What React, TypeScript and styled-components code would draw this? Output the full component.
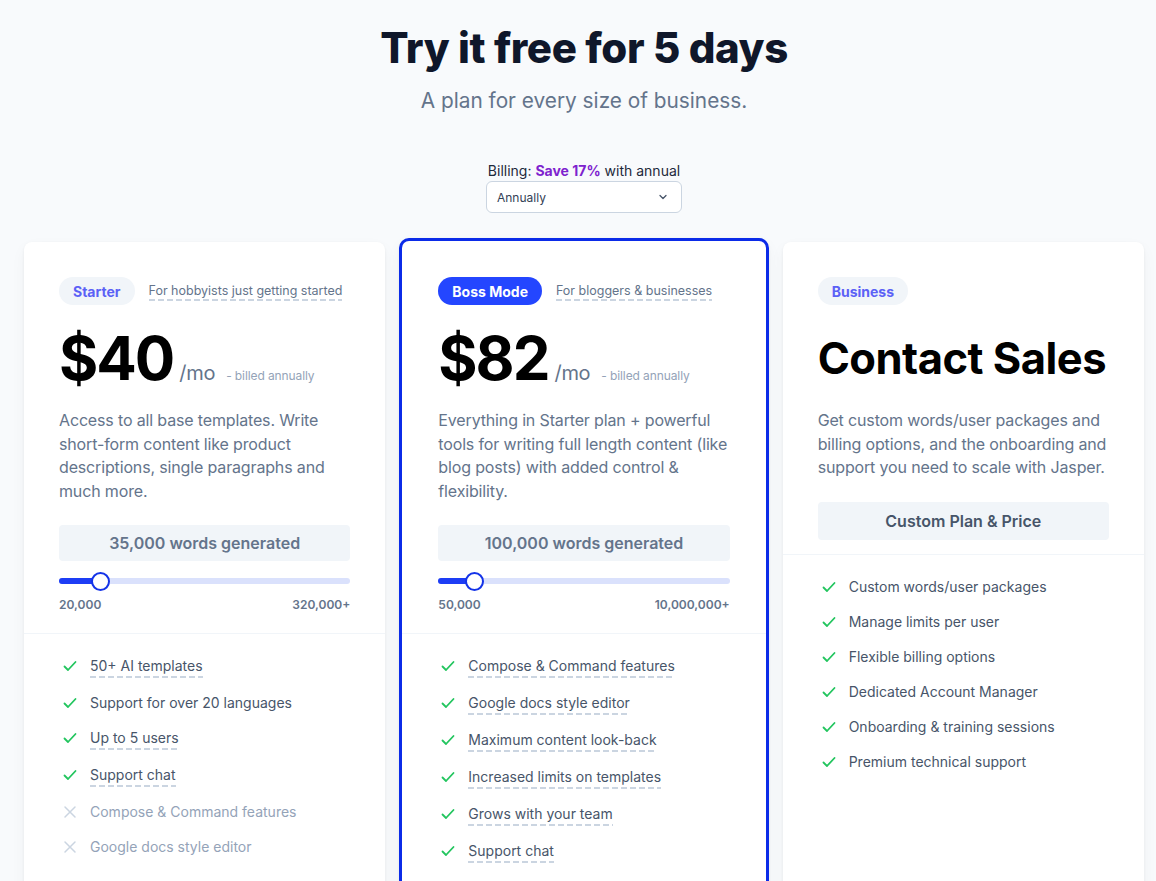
import styled, { createGlobalStyle, css } from "styled-components";

const GlobalStyle = createGlobalStyle`
  * { box-sizing: border-box; }
  body {
    margin: 0;
    background: #f8fafc;
    font-family: Inter, "Noto Sans", sans-serif;
    color: #0f172a;
  }
`

const Page = styled.div`
  padding: 23px 12px 0 24px;
  height: 881px;
  overflow: hidden;
  display: flex;
  flex-direction: column;
`
const Header = styled.header`
  display: flex;
  flex-direction: column;
  align-items: center;
`
const Title = styled.h1`
  margin: 0;
  font-size: 42px;
  line-height: 50px;
  font-weight: 800;
  color: #0f172a;
  letter-spacing: -0.4px;
`
const Subtitle = styled.p`
  margin: 14px 0 0;
  font-size: 20.8px;
  line-height: 28px;
  color: #64748b;
`
const BillingLabel = styled.div`
  margin-top: 46px;
  font-size: 14px;
  line-height: 20px;
  color: #1e293b;
  b {
    color: #7e22ce;
    font-weight: 700;
  }
`
const Select = styled.div`
  width: 196px;
  height: 32px;
  border: 1px solid #cbd5e1;
  border-radius: 6px;
  background: #fff;
  display: flex;
  align-items: center;
  justify-content: space-between;
  padding: 0 12px 0 10px;
  font-size: 12px;
  color: #334155;
`
const Cards = styled.div`
  flex: 1;
  margin-top: 29px;
  display: grid;
  grid-template-columns: repeat(3, 1fr);
  gap: 18px;
  align-items: stretch;
`
const Card = styled.section<{ $featured?: boolean }>`
  background: #fff;
  border-radius: 8px 8px 0 0;
  box-shadow: 0 1px 3px rgba(15, 23, 42, 0.06), 0 6px 16px rgba(15, 23, 42, 0.04);
  ${(p) =>
    p.$featured &&
    css`
      margin: -4px -4px 0;
      border: 3px solid #0b2be8;
      border-bottom: none;
      border-radius: 10px 10px 0 0;
    `}
`
const Top = styled.div<{ $featured?: boolean }>`
  padding: ${(p) => (p.$featured ? "36px 36px 20px" : "35px 35px 20px")};
  border-bottom: 1px solid #f1f5f9;
`
const BadgeRow = styled.div`
  display: flex;
  align-items: center;
  gap: 14px;
`
const Badge = styled.span<{ $solid?: boolean }>`
  height: 28px;
  padding: 0 14px;
  border-radius: 14px;
  display: inline-flex;
  align-items: center;
  font-size: 14px;
  font-weight: 700;
  background: ${(p) => (p.$solid ? "#2446ff" : "#f1f5f9")};
  color: ${(p) => (p.$solid ? "#fff" : "#5b61f6")};
`
const Tagline = styled.span`
  font-size: 12.5px;
  line-height: 18px;
  color: #64748b;
  padding-bottom: 1px;
  background-image: linear-gradient(to right, #cbd5e1 65%, transparent 0);
  background-size: 9px 2px;
  background-repeat: repeat-x;
  background-position: left bottom;
`
const PriceRow = styled.div`
  margin-top: 23px;
  display: flex;
  align-items: baseline;
`
const Price = styled.span`
  font-size: 60px;
  line-height: 60px;
  font-weight: 700;
  color: #000;
  letter-spacing: -2px;
`
const Per = styled.span`
  margin-left: 6px;
  font-size: 20px;
  color: #64748b;
  letter-spacing: -0.3px;
`
const Billed = styled.span`
  margin-left: 11px;
  font-size: 12px;
  color: #94a3b8;
  letter-spacing: -0.1px;
`
const ContactTitle = styled.h2`
  margin: 23px 0 0;
  font-size: 43.5px;
  line-height: 60px;
  font-weight: 700;
  color: #000;
  letter-spacing: -0.5px;
  white-space: nowrap;
`
const Description = styled.p`
  margin: 21px 0 0;
  font-size: 16px;
  line-height: 23.6px;
  color: #64748b;
  letter-spacing: -0.15px;
`
const WordsBox = styled.div`
  margin-top: 22px;
  height: 36px;
  border-radius: 4px;
  background: #f1f5f9;
  display: flex;
  align-items: center;
  justify-content: center;
  font-size: 16px;
  font-weight: 600;
  color: #64748b;
`
const ActionButton = styled(WordsBox)`
  height: 38px;
  color: #475569;
  margin-top: 22px;
  margin-bottom: -6px;
`
const Track = styled.div`
  position: relative;
  margin-top: 17px;
  height: 6px;
  border-radius: 3px;
  background: #dae1fc;
`
const Fill = styled.div`
  height: 100%;
  border-radius: 3px;
  background: #1d3df5;
`
const Thumb = styled.div`
  position: absolute;
  top: 50%;
  width: 19px;
  height: 19px;
  margin: -9.5px 0 0 -9.5px;
  border-radius: 50%;
  background: #fff;
  border: 2px solid #1433e8;
`
const RangeLabels = styled.div`
  margin-top: 13px;
  display: flex;
  justify-content: space-between;
  font-size: 12px;
  line-height: 16px;
  font-weight: 600;
  color: #64748b;
`
const Features = styled.ul`
  list-style: none;
  margin: 0;
  padding: 22px 35px 30px 38px;
  display: flex;
  flex-direction: column;
  gap: 15px;
`
const Feature = styled.li<{ $off?: boolean }>`
  display: flex;
  align-items: flex-start;
  gap: 12px;
  font-size: 14px;
  line-height: 20px;
  color: ${(p) => (p.$off ? "#94a3b8" : "#475569")};
  svg {
    flex: none;
    margin-top: 2px;
  }
`
const Dashed = styled.span<{ $dashed?: boolean }>`
  ${(p) =>
    p.$dashed &&
    css`
      padding-bottom: 2px;
      background-image: linear-gradient(to right, #cbd5e1 65%, transparent 0);
      background-size: 9px 2px;
      background-repeat: repeat-x;
      background-position: left bottom;
    `}
`

const CheckIcon = () => (
  <svg width="16" height="16" viewBox="0 0 16 16" fill="none">
    <path d="M2.5 8.5 6 12l7.5-8" stroke="#22c55e" strokeWidth="1.8" strokeLinecap="round" strokeLinejoin="round" />
  </svg>
)
const CrossIcon = () => (
  <svg width="16" height="16" viewBox="0 0 16 16" fill="none">
    <path d="M3 3l10 10M13 3 3 13" stroke="#cbd5e1" strokeWidth="1.5" strokeLinecap="round" />
  </svg>
)
const Chevron = () => (
  <svg width="12" height="12" viewBox="0 0 12 12" fill="none">
    <path d="M3 4.5 6 7.5l3-3" stroke="#475569" strokeWidth="1.3" strokeLinecap="round" strokeLinejoin="round" />
  </svg>
)

interface IFeature {
  text: string;
  dashed?: boolean;
  off?: boolean;
}

interface IPlan {
  badge: string;
  tagline: string;
  price: string;
  description: string;
  words: string;
  min: string;
  max: string;
  pos: number;
  featured?: boolean;
  features: IFeature[];
}

const plans: IPlan[] = [
  {
    badge: "Starter",
    tagline: "For hobbyists just getting started",
    price: "$40",
    description:
      "Access to all base templates. Write short-form content like product descriptions, single paragraphs and much more.",
    words: "35,000 words generated",
    min: "20,000",
    max: "320,000+",
    pos: 41,
    features: [
      { text: "50+ AI templates", dashed: true },
      { text: "Support for over 20 languages" },
      { text: "Up to 5 users", dashed: true },
      { text: "Support chat", dashed: true },
      { text: "Compose & Command features", off: true },
      { text: "Google docs style editor", off: true },
    ],
  },
  {
    badge: "Boss Mode",
    tagline: "For bloggers & businesses",
    price: "$82",
    description:
      "Everything in Starter plan + powerful tools for writing full length content (like blog posts) with added control & flexibility.",
    words: "100,000 words generated",
    min: "50,000",
    max: "10,000,000+",
    pos: 36,
    featured: true,
    features: [
      { text: "Compose & Command features", dashed: true },
      { text: "Google docs style editor", dashed: true },
      { text: "Maximum content look-back", dashed: true },
      { text: "Increased limits on templates", dashed: true },
      { text: "Grows with your team", dashed: true },
      { text: "Support chat", dashed: true },
    ],
  },
]

const businessFeatures = [
  "Custom words/user packages",
  "Manage limits per user",
  "Flexible billing options",
  "Dedicated Account Manager",
  "Onboarding & training sessions",
  "Premium technical support",
]

function PlanCard({ plan }: { plan: IPlan }) {
  return (
    <Card $featured={plan.featured}>
      <Top $featured={plan.featured}>
        <BadgeRow>
          <Badge $solid={plan.featured}>{plan.badge}</Badge>
          <Tagline>{plan.tagline}</Tagline>
        </BadgeRow>
        <PriceRow>
          <Price>{plan.price}</Price>
          <Per>/mo</Per>
          <Billed>- billed annually</Billed>
        </PriceRow>
        <Description>{plan.description}</Description>
        <WordsBox>{plan.words}</WordsBox>
        <Track>
          <Fill style={{ width: plan.pos }} />
          <Thumb style={{ left: plan.pos }} />
        </Track>
        <RangeLabels>
          <span>{plan.min}</span>
          <span>{plan.max}</span>
        </RangeLabels>
      </Top>
      <Features>
        {plan.features.map((f) => (
          <Feature key={f.text} $off={f.off}>
            {f.off ? <CrossIcon /> : <CheckIcon />}
            <Dashed $dashed={f.dashed}>{f.text}</Dashed>
          </Feature>
        ))}
      </Features>
    </Card>
  )
}

function App() {
  return (
    <Page>
      <GlobalStyle />
      <Header>
        <Title>Try it free for 5 days</Title>
        <Subtitle>A plan for every size of business.</Subtitle>
        <BillingLabel>
          Billing: <b>Save 17%</b> with annual
        </BillingLabel>
        <Select>
          <span>Annually</span>
          <Chevron />
        </Select>
      </Header>
      <Cards>
        {plans.map((p) => (
          <PlanCard key={p.badge} plan={p} />
        ))}
        <Card>
          <Top>
            <BadgeRow>
              <Badge>Business</Badge>
            </BadgeRow>
            <ContactTitle>Contact Sales</ContactTitle>
            <Description>
              Get custom words/user packages and billing options, and the onboarding and support you need to scale with Jasper.
            </Description>
            <ActionButton>Custom Plan &amp; Price</ActionButton>
          </Top>
          <Features>
            {businessFeatures.map((t) => (
              <Feature key={t}>
                <CheckIcon />
                <span>{t}</span>
              </Feature>
            ))}
          </Features>
        </Card>
      </Cards>
    </Page>
  )
}

export default App;
